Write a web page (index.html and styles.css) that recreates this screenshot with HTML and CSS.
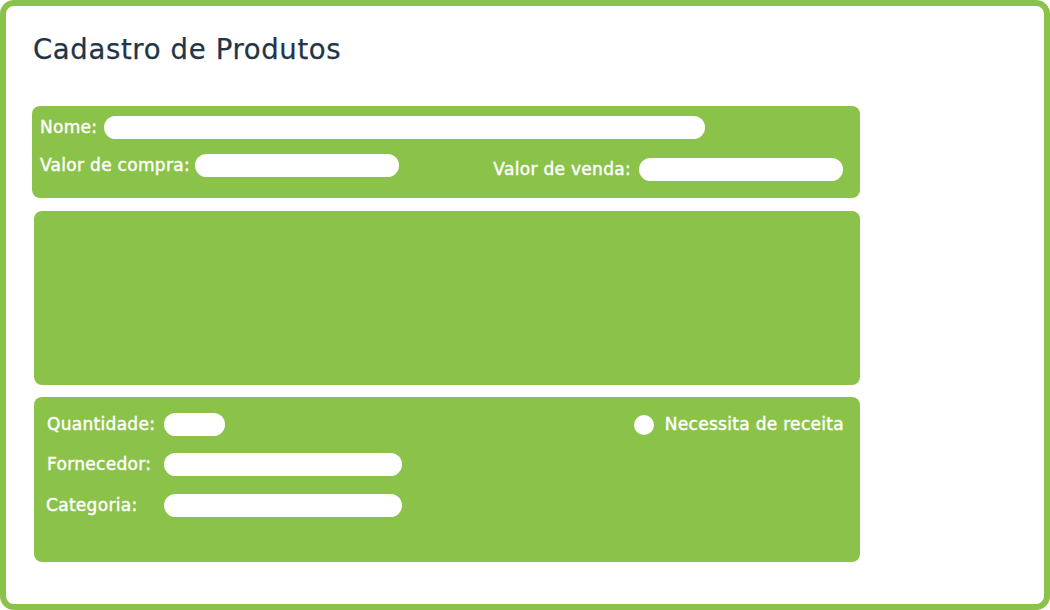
FILE: index.html
```html
<!DOCTYPE html>
<html lang="pt">
<head>
<meta charset="utf-8">
<title>Cadastro de Produtos</title>
<link rel="stylesheet" href="styles.css">
</head>
<body>
<div class="frame">
  <h1 class="title">Cadastro de Produtos</h1>
  <section class="panel panel-main">
    <div class="row">
      <label class="lbl">Nome:</label>
      <span class="input input-nome"></span>
    </div>
    <div class="row row-values">
      <div class="group">
        <label class="lbl">Valor de compra:</label>
        <span class="input input-valor input-compra"></span>
      </div>
      <div class="group group-venda">
        <label class="lbl">Valor de venda:</label>
        <span class="input input-valor"></span>
      </div>
    </div>
  </section>
  <section class="panel panel-empty"></section>
  <section class="panel panel-details">
    <div class="fields">
      <div class="frow">
        <label class="lbl lbl-col">Quantidade:</label>
        <span class="input input-qtd"></span>
      </div>
      <div class="frow">
        <label class="lbl lbl-col">Fornecedor:</label>
        <span class="input input-wide"></span>
      </div>
      <div class="frow">
        <label class="lbl lbl-col lbl-cat">Categoria:</label>
        <span class="input input-wide"></span>
      </div>
    </div>
    <div class="radio-row">
      <span class="radio"></span>
      <span class="lbl">Necessita de receita</span>
    </div>
  </section>
</div>
</body>
</html>
```
FILE: styles.css
```css
html, body {
  margin: 0;
  padding: 0;
  background: #ffffff;
}
body {
  font-family: "DejaVu Sans", "Open Sans", sans-serif;
}
.frame {
  box-sizing: border-box;
  width: 1050px;
  height: 610px;
  border: 6px solid #8bc34a;
  border-radius: 14px;
  padding: 0 0 0 26px;
}
.title {
  margin: 25px 0 0 1px;
  font-size: 27.5px;
  font-weight: 400;
  line-height: 36px;
  color: #233545;
  letter-spacing: 0.65px;
  -webkit-text-stroke: 0.25px #233545;
}
.panel {
  background: #8bc34a;
  border-radius: 8px;
  box-sizing: border-box;
}
.panel-main {
  margin-top: 39px;
  width: 828px;
  height: 92px;
  padding: 10px 17px 0 8px;
}
.panel-empty {
  margin: 13px 0 0 2px;
  width: 826px;
  height: 174px;
}
.panel-details {
  margin: 12px 0 0 2px;
  width: 826px;
  height: 165px;
  padding: 16px 16px 0 13px;
  display: flex;
  justify-content: space-between;
  align-items: flex-start;
}
.lbl {
  color: #ffffff;
  font-size: 17px;
  font-weight: 400;
  line-height: 23px;
  letter-spacing: 0.3px;
  white-space: nowrap;
  -webkit-text-stroke: 0.45px #ffffff;
}
.input {
  display: block;
  background: #ffffff;
  height: 23px;
  border-radius: 12px;
}
.row {
  display: flex;
  align-items: center;
  gap: 7px;
}
.row-values {
  margin-top: 15px;
  justify-content: space-between;
  align-items: flex-start;
}
.group {
  display: flex;
  align-items: center;
  gap: 5px;
}
.group-venda {
  margin-top: 4px;
  gap: 8px;
}
.input-nome { width: 601px; }
.input-valor { width: 204px; }
.fields {
  display: flex;
  flex-direction: column;
  gap: 17px;
}
.frow {
  display: flex;
  align-items: center;
}
.lbl-col { width: 117px; }
.lbl-cat { margin-left: -1px; width: 118px; }
.frow:last-child { margin-top: 1px; }
.input-qtd { width: 61px; }
.input-wide { width: 238px; }
.radio-row {
  display: flex;
  align-items: center;
  gap: 11px;
}
.radio {
  width: 20px;
  height: 20px;
  border-radius: 50%;
  background: #ffffff;
}
```
